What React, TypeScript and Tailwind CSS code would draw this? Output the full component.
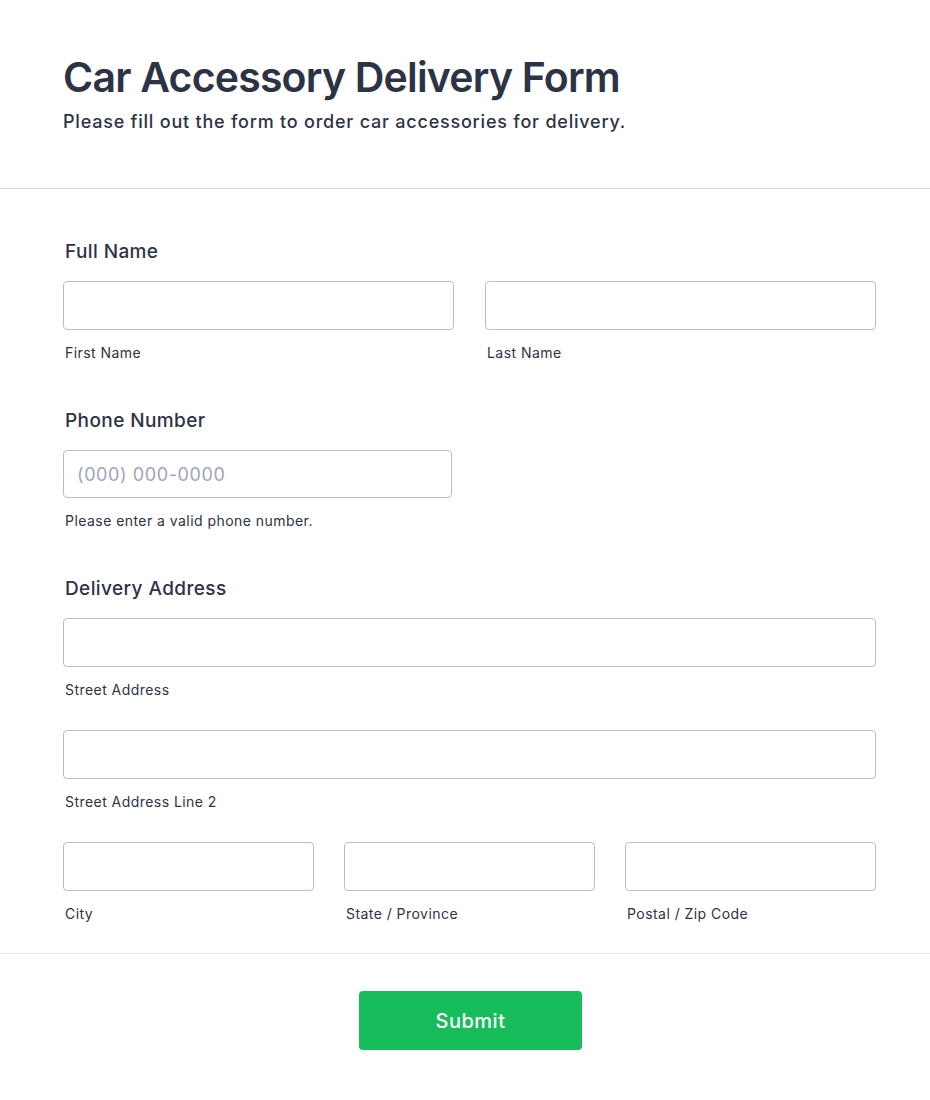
import { FC } from "react";

const Input: FC<{ className?: string; placeholder?: string }> = ({ className = "h-[49px]", placeholder }) => (
  <input
    type="text"
    placeholder={placeholder}
    className={`w-full rounded-[4px] border border-[#b8bdc9] bg-white px-[13px] text-[18px] tracking-[0.6px] text-[#2c3345] outline-none placeholder:text-[#9ea5b4] ${className}`}
  />
);

const Field: FC<{ sub: string; placeholder?: string; className?: string; inputClass?: string }> = ({
  sub,
  placeholder,
  className = "",
  inputClass,
}) => (
  <div className={`flex flex-col ${className}`}>
    <Input placeholder={placeholder} className={inputClass} />
    <span className="mt-[13px] pl-[2px] text-[14px] leading-[20px] tracking-[0.45px] text-[#2c3345]">{sub}</span>
  </div>
);

const Label: FC<{ text: string }> = ({ text }) => (
  <div className="pl-[2px] text-[19px] font-medium leading-[22px] tracking-[0.4px] text-[#2c3345]">{text}</div>
);

export default function App() {
  return (
    <div className="min-h-[1100px] bg-white font-['Inter',sans-serif] text-[#2c3345]">
      <header className="border-b border-[#d8dae4] pb-[54px] pl-[63px] pt-[54px]">
        <h1 className="text-[41px] font-semibold leading-[46px] tracking-[-0.8px]">Car Accessory Delivery Form</h1>
        <p className="mt-[10px] text-[18px] font-medium leading-[24px] tracking-[0.78px]">
          Please fill out the form to order car accessories for delivery.
        </p>
      </header>

      <form className="border-b border-[#e6e8eb] pb-[29px] pt-[52px]" onSubmit={(e) => e.preventDefault()}>
        <div className="ml-[63px] flex w-[813px] flex-col gap-[47px]">
          <section className="flex flex-col gap-[18px]">
            <Label text="Full Name" />
            <div className="grid grid-cols-2 gap-[31px]">
              <Field sub="First Name" />
              <Field sub="Last Name" />
            </div>
          </section>

          <section className="flex flex-col gap-[18px]">
            <Label text="Phone Number" />
            <Field
              sub="Please enter a valid phone number."
              placeholder="(000) 000-0000"
              className="w-[389px]"
              inputClass="h-[48px]"
            />
          </section>

          <section className="flex flex-col gap-[18px]">
            <Label text="Delivery Address" />
            <div className="flex flex-col gap-[30px]">
              <Field sub="Street Address" />
              <Field sub="Street Address Line 2" />
              <div className="grid grid-cols-3 gap-[30px]">
                <Field sub="City" />
                <Field sub="State / Province" />
                <Field sub="Postal / Zip Code" />
              </div>
            </div>
          </section>
        </div>
      </form>

      <div className="ml-[64px] flex w-[813px] justify-center pt-[37px]">
        <button
          type="button"
          className="h-[59px] w-[223px] rounded-[4px] bg-[#18bd5b] text-[20px] font-medium tracking-[0.5px] text-white"
        >
          Submit
        </button>
      </div>
    </div>
  );
}
